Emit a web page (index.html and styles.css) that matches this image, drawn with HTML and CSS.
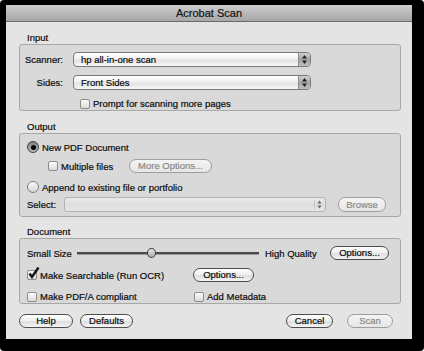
FILE: index.html
```html
<!DOCTYPE html>
<html lang="en">

<head>
    <meta charset="UTF-8">
    <meta name="viewport" content="width=device-width, initial-scale=1.0">
    <title>Acrobat Scan</title>
    <link rel="stylesheet" href="styles.css">
</head>

<body>
    <div class="frame">
        <div class="window">
            <div class="titlebar">Acrobat Scan</div>

            <div class="content">
                <div class="group-label">Input</div>
                <div class="group input-group">
                    <div class="field-row">
                        <span class="field-label">Scanner:</span>
                        <div class="popup">
                            <span class="popup-text">hp all-in-one scan</span>
                            <span class="popup-arrows">
                                <svg width="7" height="11" viewBox="0 0 7 11"><path d="M3.5 1 L6 4.5 L1 4.5 Z M3.5 10 L6 6.5 L1 6.5 Z" fill="#222"/></svg>
                            </span>
                        </div>
                    </div>
                    <div class="field-row sides-row">
                        <span class="field-label">Sides:</span>
                        <div class="popup">
                            <span class="popup-text">Front Sides</span>
                            <span class="popup-arrows">
                                <svg width="7" height="11" viewBox="0 0 7 11"><path d="M3.5 1 L6 4.5 L1 4.5 Z M3.5 10 L6 6.5 L1 6.5 Z" fill="#222"/></svg>
                            </span>
                        </div>
                    </div>
                    <div class="check-row prompt-row">
                        <span class="checkbox"></span>Prompt for scanning more pages
                    </div>
                </div>

                <div class="group-label output-label">Output</div>
                <div class="group output-group">
                    <div class="radio-row">
                        <span class="radio selected"><span class="dot"></span></span>New PDF Document
                    </div>
                    <div class="multi-row">
                        <div class="check-row multi-check"><span class="checkbox"></span>Multiple files</div>
                        <button class="btn disabled more-btn">More Options...</button>
                    </div>
                    <div class="radio-row append-row">
                        <span class="radio"></span>Append to existing file or portfolio
                    </div>
                    <div class="select-row">
                        <span class="select-label">Select:</span>
                        <div class="path-field">
                            <span class="path-arrows">
                                <svg width="5" height="9" viewBox="0 0 5 9"><path d="M2.5 0.5 L4.5 3.5 L0.5 3.5 Z M2.5 8.5 L4.5 5.5 L0.5 5.5 Z" fill="#666"/></svg>
                            </span>
                        </div>
                        <button class="btn disabled browse-btn">Browse</button>
                    </div>
                </div>

                <div class="group-label document-label">Document</div>
                <div class="group document-group">
                    <div class="quality-row">
                        <span class="small-label">Small Size</span>
                        <div class="slider">
                            <div class="track"></div>
                            <div class="thumb"></div>
                        </div>
                        <span class="high-label">High Quality</span>
                        <button class="btn quality-btn">Options...</button>
                    </div>
                    <div class="doc-row">
                        <div class="check-row doc-check">
                            <span class="checkbox checked">
                                <svg width="13" height="13" viewBox="0 0 13 13"><path d="M2.5 6.5 L5 10 L11.5 0.5" fill="none" stroke="#111" stroke-width="2.4"/></svg>
                            </span>Make Searchable (Run OCR)
                        </div>
                        <button class="btn ocr-btn">Options...</button>
                    </div>
                    <div class="doc-row last-row">
                        <div class="check-row doc-check pdfa-check"><span class="checkbox"></span>Make PDF/A compliant</div>
                        <div class="check-row"><span class="checkbox"></span>Add Metadata</div>
                    </div>
                </div>

                <div class="button-row">
                    <button class="btn help-btn">Help</button>
                    <button class="btn defaults-btn">Defaults</button>
                    <button class="btn cancel-btn">Cancel</button>
                    <button class="btn disabled scan-btn">Scan</button>
                </div>
            </div>
        </div>
    </div>
</body>
</html>
```

FILE: styles.css
```css
* {
    margin: 0;
    padding: 0;
    box-sizing: border-box;
}

body {
    background: #fff;
    font-family: "Liberation Sans", Arial, sans-serif;
    font-size: 9.5px;
    color: #0c0c0c;
    -webkit-text-stroke: 0.2px;
}

.frame {
    width: 424px;
    height: 351px;
    background: #000;
    border-radius: 4px;
    padding: 5px 12px 12px 6px;
}

.window {
    width: 406px;
    height: 334px;
    background: #e4e4e4;
}

.titlebar {
    height: 17px;
    border-bottom: 1px solid #6c6c6c;
    background: linear-gradient(#cdcdcd, #a6a6a6);
    text-align: center;
    font-size: 11px;
    line-height: 16px;
    color: #111;
}

.content {
    padding: 10px 11px 0 13px;
}

.group-label {
    height: 12px;
    line-height: 12px;
    padding-left: 8px;
}

.output-label {
    margin-top: 10px;
}

.document-label {
    margin-top: 9px;
}

.group {
    border: 1px solid #a8a8a8;
    border-radius: 3px;
    background: #d9d9d9;
}

/* input */

.input-group {
    height: 67px;
    padding-top: 7px;
}

.field-row {
    display: flex;
    align-items: center;
    height: 15px;
}

.sides-row {
    margin-top: 8px;
}

.field-label {
    width: 43px;
    margin-right: 10px;
    text-align: right;
}

.popup {
    width: 238px;
    height: 15px;
    display: flex;
    align-items: stretch;
    border: 1px solid #7a7a7a;
    border-radius: 4px;
    background: linear-gradient(#ffffff, #f0f0f0 45%, #e2e2e2 55%, #f7f7f7);
    overflow: hidden;
}

.popup-text {
    padding-left: 7px;
    line-height: 13px;
}

.popup-arrows {
    margin-left: auto;
    width: 12px;
    display: flex;
    align-items: center;
    justify-content: center;
    border-left: 1px solid #8a8a8a;
    background: linear-gradient(#d0d0d0, #a4a4a4 50%, #bdbdbd);
}

.check-row {
    display: flex;
    align-items: center;
    height: 13px;
}

.prompt-row {
    margin-top: 7px;
    margin-left: 60px;
}

.checkbox {
    position: relative;
    width: 10px;
    height: 10px;
    margin-right: 3px;
    border: 1px solid #8c8c8c;
    border-radius: 2px;
    background: linear-gradient(#fafafa, #dcdcdc);
    flex-shrink: 0;
}

.checkbox svg {
    position: absolute;
    left: -1px;
    top: -4px;
}

.radio {
    width: 12px;
    height: 12px;
    margin-right: 3px;
    border: 1px solid #808080;
    border-radius: 50%;
    background: linear-gradient(#fbfbfb, #d6d6d6);
    display: flex;
    align-items: center;
    justify-content: center;
    flex-shrink: 0;
}

.radio.selected {
    border-color: #444;
    background: linear-gradient(#7e7e7e, #bdbdbd);
}

.dot {
    width: 5px;
    height: 5px;
    border-radius: 50%;
    background: #000;
}

/* output */

.output-group {
    height: 84px;
    padding: 7px 0 0 7px;
}

.radio-row {
    display: flex;
    align-items: center;
    height: 12px;
}

.multi-row {
    display: flex;
    align-items: center;
    height: 14px;
    margin-top: 6px;
    padding-left: 21px;
}

.multi-check {
    width: 81px;
}

.append-row {
    margin-top: 8px;
}

.select-row {
    display: flex;
    align-items: center;
    height: 15px;
    margin-top: 4px;
}

.select-label {
    width: 37px;
}

.path-field {
    width: 262px;
    height: 15px;
    display: flex;
    justify-content: flex-end;
    align-items: center;
    border: 1px solid #b4b4b4;
    border-radius: 3px;
    background: linear-gradient(#e9e9e9, #dedede 50%, #e6e6e6);
    padding-right: 3px;
}

.path-arrows {
    display: flex;
    padding-left: 2px;
    border-left: 1px solid #c4c4c4;
}

/* buttons */

.btn {
    height: 14px;
    font-family: "Liberation Sans", Arial, sans-serif;
    font-size: 9.5px;
    color: #0c0c0c;
    -webkit-text-stroke: 0.2px;
    border: 1px solid #4c4c4c;
    border-radius: 7px;
    background: linear-gradient(#ffffff, #ededed 50%, #dedede 55%, #f4f4f4);
    line-height: 12px;
}

.btn.disabled {
    color: #8a8a8a;
    border-color: #9e9e9e;
    background: linear-gradient(#f4f4f4, #e6e6e6);
}

.more-btn {
    width: 83px;
}

.browse-btn {
    width: 48px;
    height: 15px;
    margin-left: 12px;
}

/* document */

.document-group {
    height: 66px;
    padding-top: 7px;
    padding-left: 7px;
}

.quality-row {
    display: flex;
    align-items: center;
    height: 14px;
}

.small-label {
    width: 50px;
}

.slider {
    position: relative;
    width: 182px;
    height: 10px;
    margin-right: 6px;
}

.track {
    position: absolute;
    left: 0;
    right: 0;
    top: 4px;
    height: 3px;
    background: #4a4a4a;
    border-bottom: 1px solid #9a9a9a;
}

.thumb {
    position: absolute;
    left: 70px;
    top: 0;
    width: 9px;
    height: 10px;
    border: 1px solid #444;
    border-radius: 50%;
    background: linear-gradient(#e8e8e8, #a8a8a8);
}

.high-label {
    width: 65px;
}

.quality-btn {
    width: 59px;
}

.doc-row {
    display: flex;
    align-items: center;
    height: 14px;
    margin-top: 8px;
}

.last-row {
    height: 13px;
}

.doc-check {
    width: 166px;
}

.pdfa-check {
    width: 167px;
}

.ocr-btn {
    width: 61px;
}

.button-row {
    display: flex;
    margin-top: 10px;
    padding-right: 8px;
}

.help-btn {
    width: 54px;
}

.defaults-btn {
    width: 53px;
    margin-left: 7px;
}

.cancel-btn {
    width: 47px;
    margin-left: auto;
}

.scan-btn {
    width: 46px;
    margin-left: 14px;
}
```
